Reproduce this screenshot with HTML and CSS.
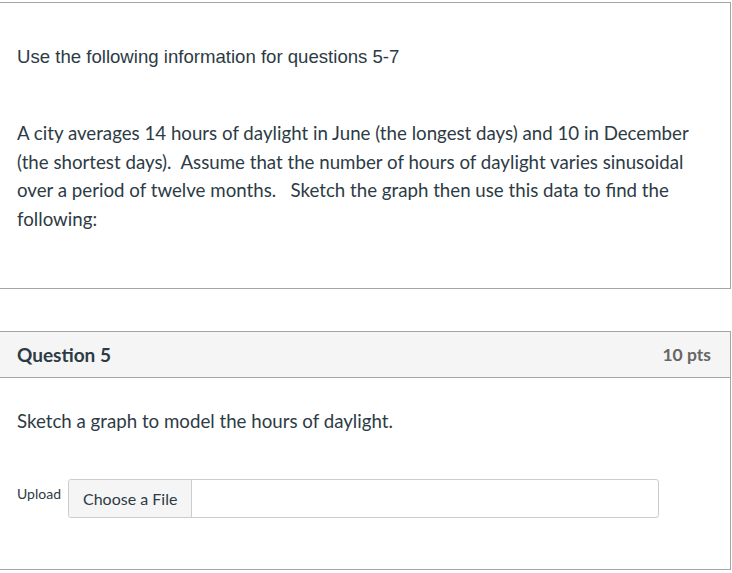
FILE: index.html
```html
<!DOCTYPE html>
<html>
<head>
<meta charset="utf-8">
<link rel="stylesheet" href="styles.css">
</head>
<body>
<div class="info-box">
  <p class="intro">Use the following information for questions 5-7</p>
  <p class="para">A city averages 14 hours of daylight in June (the longest days) and 10 in December (the shortest days).&nbsp; Assume that the number of hours of daylight varies sinusoidal over a period of twelve months. &nbsp; Sketch the graph then use this data to find the following:</p>
</div>
<div class="question">
  <div class="q-header">
    <span class="q-title">Question 5</span>
    <span class="q-pts">10 pts</span>
  </div>
  <div class="q-body">
    <p class="q-text">Sketch a graph to model the hours of daylight.</p>
    <div class="upload">
      <span class="upload-label">Upload</span>
      <div class="file-input">
        <span class="file-btn">Choose a File</span>
      </div>
    </div>
  </div>
</div>
</body>
</html>
```

FILE: styles.css
```css
html, body {
  margin: 0;
  padding: 0;
  background: #ffffff;
}
body {
  color: #2d3b45;
  font-family: Lato, "Noto Sans", sans-serif;
}
.info-box {
  margin-top: 2px;
  width: 730px;
  height: 285px;
  border: 1px solid #a5a5a5;
  border-left: none;
  box-sizing: content-box;
}
.intro {
  margin: 43px 0 0 17px;
  font-family: "Liberation Sans", Arial, sans-serif;
  font-size: 18.6px;
  line-height: 22px;
}
.para {
  margin: 51px 30px 0 17px;
  font-size: 18.7px;
  line-height: 28.5px;
}
.question {
  margin-top: 42px;
  width: 730px;
  border: 1px solid #a5a5a5;
  border-left: none;
}
.q-header {
  display: flex;
  justify-content: space-between;
  align-items: center;
  height: 45px;
  padding: 0 19px 0 17px;
  background: #f5f5f5;
  border-bottom: 1px solid #a5a5a5;
  font-weight: 700;
}
.q-title {
  font-size: 19px;
}
.q-pts {
  font-size: 17.5px;
  color: #666666;
}
.q-body {
  height: 191px;
  padding: 0 0 0 17px;
}
.q-text {
  margin: 0;
  padding-top: 31px;
  font-size: 18.7px;
  line-height: 24px;
}
.upload {
  display: flex;
  align-items: flex-start;
  margin-top: 46px;
}
.upload-label {
  font-size: 14px;
  line-height: 20px;
  width: 51px;
  padding-top: 5px;
}
.file-input {
  width: 589px;
  height: 37px;
  border: 1px solid #c7cdd1;
  border-radius: 3px;
}
.file-btn {
  display: inline-flex;
  align-items: center;
  box-sizing: border-box;
  height: 37px;
  padding: 0 14px 0 14px;
  background: #f5f5f5;
  border-right: 1px solid #c7cdd1;
  border-radius: 3px 0 0 3px;
  font-size: 16px;
}
```
